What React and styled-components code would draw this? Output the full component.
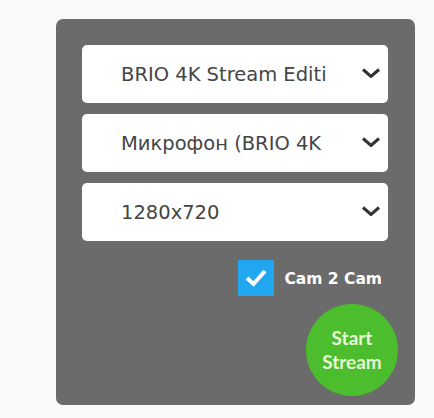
import React from 'react'
import styled, { createGlobalStyle } from 'styled-components';

const GlobalStyle = createGlobalStyle`
    body {
        margin: 0;
        background: #f9f9f9;
        font-family: "DejaVu Sans", "Noto Sans", sans-serif;
    }
`;

const Page = styled.div`
    padding: 19px 0 0 56px;
`;

const Panel = styled.div`
    width: 359px;
    height: 386px;
    box-sizing: border-box;
    padding: 26px 27px 8px 26px;
    background: #6b6b6b;
    border-radius: 7px;
    display: flex;
    flex-direction: column;
`;

const SelectList = styled.div`
    display: flex;
    flex-direction: column;
    gap: 11px;
`;

const SelectBox = styled.div`
    height: 58px;
    background: #fff;
    border-radius: 5px;
    display: flex;
    align-items: center;
    padding: 0 7px 0 39px;
    box-sizing: border-box;
`;

const SelectText = styled.span`
    flex: 1;
    font-size: 19.5px;
    color: #454545;
    white-space: nowrap;
    overflow: hidden;
    max-width: 205px;
    margin-right: auto;
`;

const Chevron = styled.svg`
    width: 20px;
    height: 10px;
    margin-left: auto;
    margin-bottom: 2px;
`;

const CheckRow = styled.label`
    margin-top: 19px;
    display: flex;
    align-items: center;
    justify-content: flex-end;
    gap: 10px;
    padding-right: 6px;
`;

const CheckBox = styled.span`
    width: 36px;
    height: 36px;
    background: #21a7ef;
    display: flex;
    align-items: center;
    justify-content: center;
`;

const CheckLabel = styled.span`
    color: #fff;
    font-size: 15.5px;
    font-weight: 700;
    margin-top: 1px;
`;

const StartButton = styled.button`
    align-self: flex-end;
    margin: 8px -10px 0 0;
    width: 92px;
    height: 92px;
    border-radius: 50%;
    border: none;
    background: #4cbd2c;
    color: #e8f8d6;
    font-family: Lato, sans-serif;
    font-size: 19px;
    font-weight: 700;
    line-height: 24px;
    padding: 0;
`;

const devices = ['BRIO 4K Stream Edition', 'Микрофон (BRIO 4K Stream Edition)', '1280x720'];

export default function App() {
    return (
        <React.Fragment>
            <GlobalStyle />
            <Page>
                <Panel>
                    <SelectList>
                        {devices.map((d, i) =>
                            <SelectBox key={i}>
                                <SelectText>{d}</SelectText>
                                <Chevron viewBox="0 0 20 10">
                                    <path d="M2 1.5 L10 8.5 L18 1.5" fill="none" stroke="#333" strokeWidth="3" />
                                </Chevron>
                            </SelectBox>
                        )}
                    </SelectList>
                    <CheckRow>
                        <CheckBox>
                            <svg width="24" height="20" viewBox="0 0 24 20">
                                <path d="M3 10 L9.5 16 L21 3" fill="none" stroke="#fff" strokeWidth="4" />
                            </svg>
                        </CheckBox>
                        <CheckLabel>Cam 2 Cam</CheckLabel>
                    </CheckRow>
                    <StartButton>Start<br />Stream</StartButton>
                </Panel>
            </Page>
        </React.Fragment>
    )
}
